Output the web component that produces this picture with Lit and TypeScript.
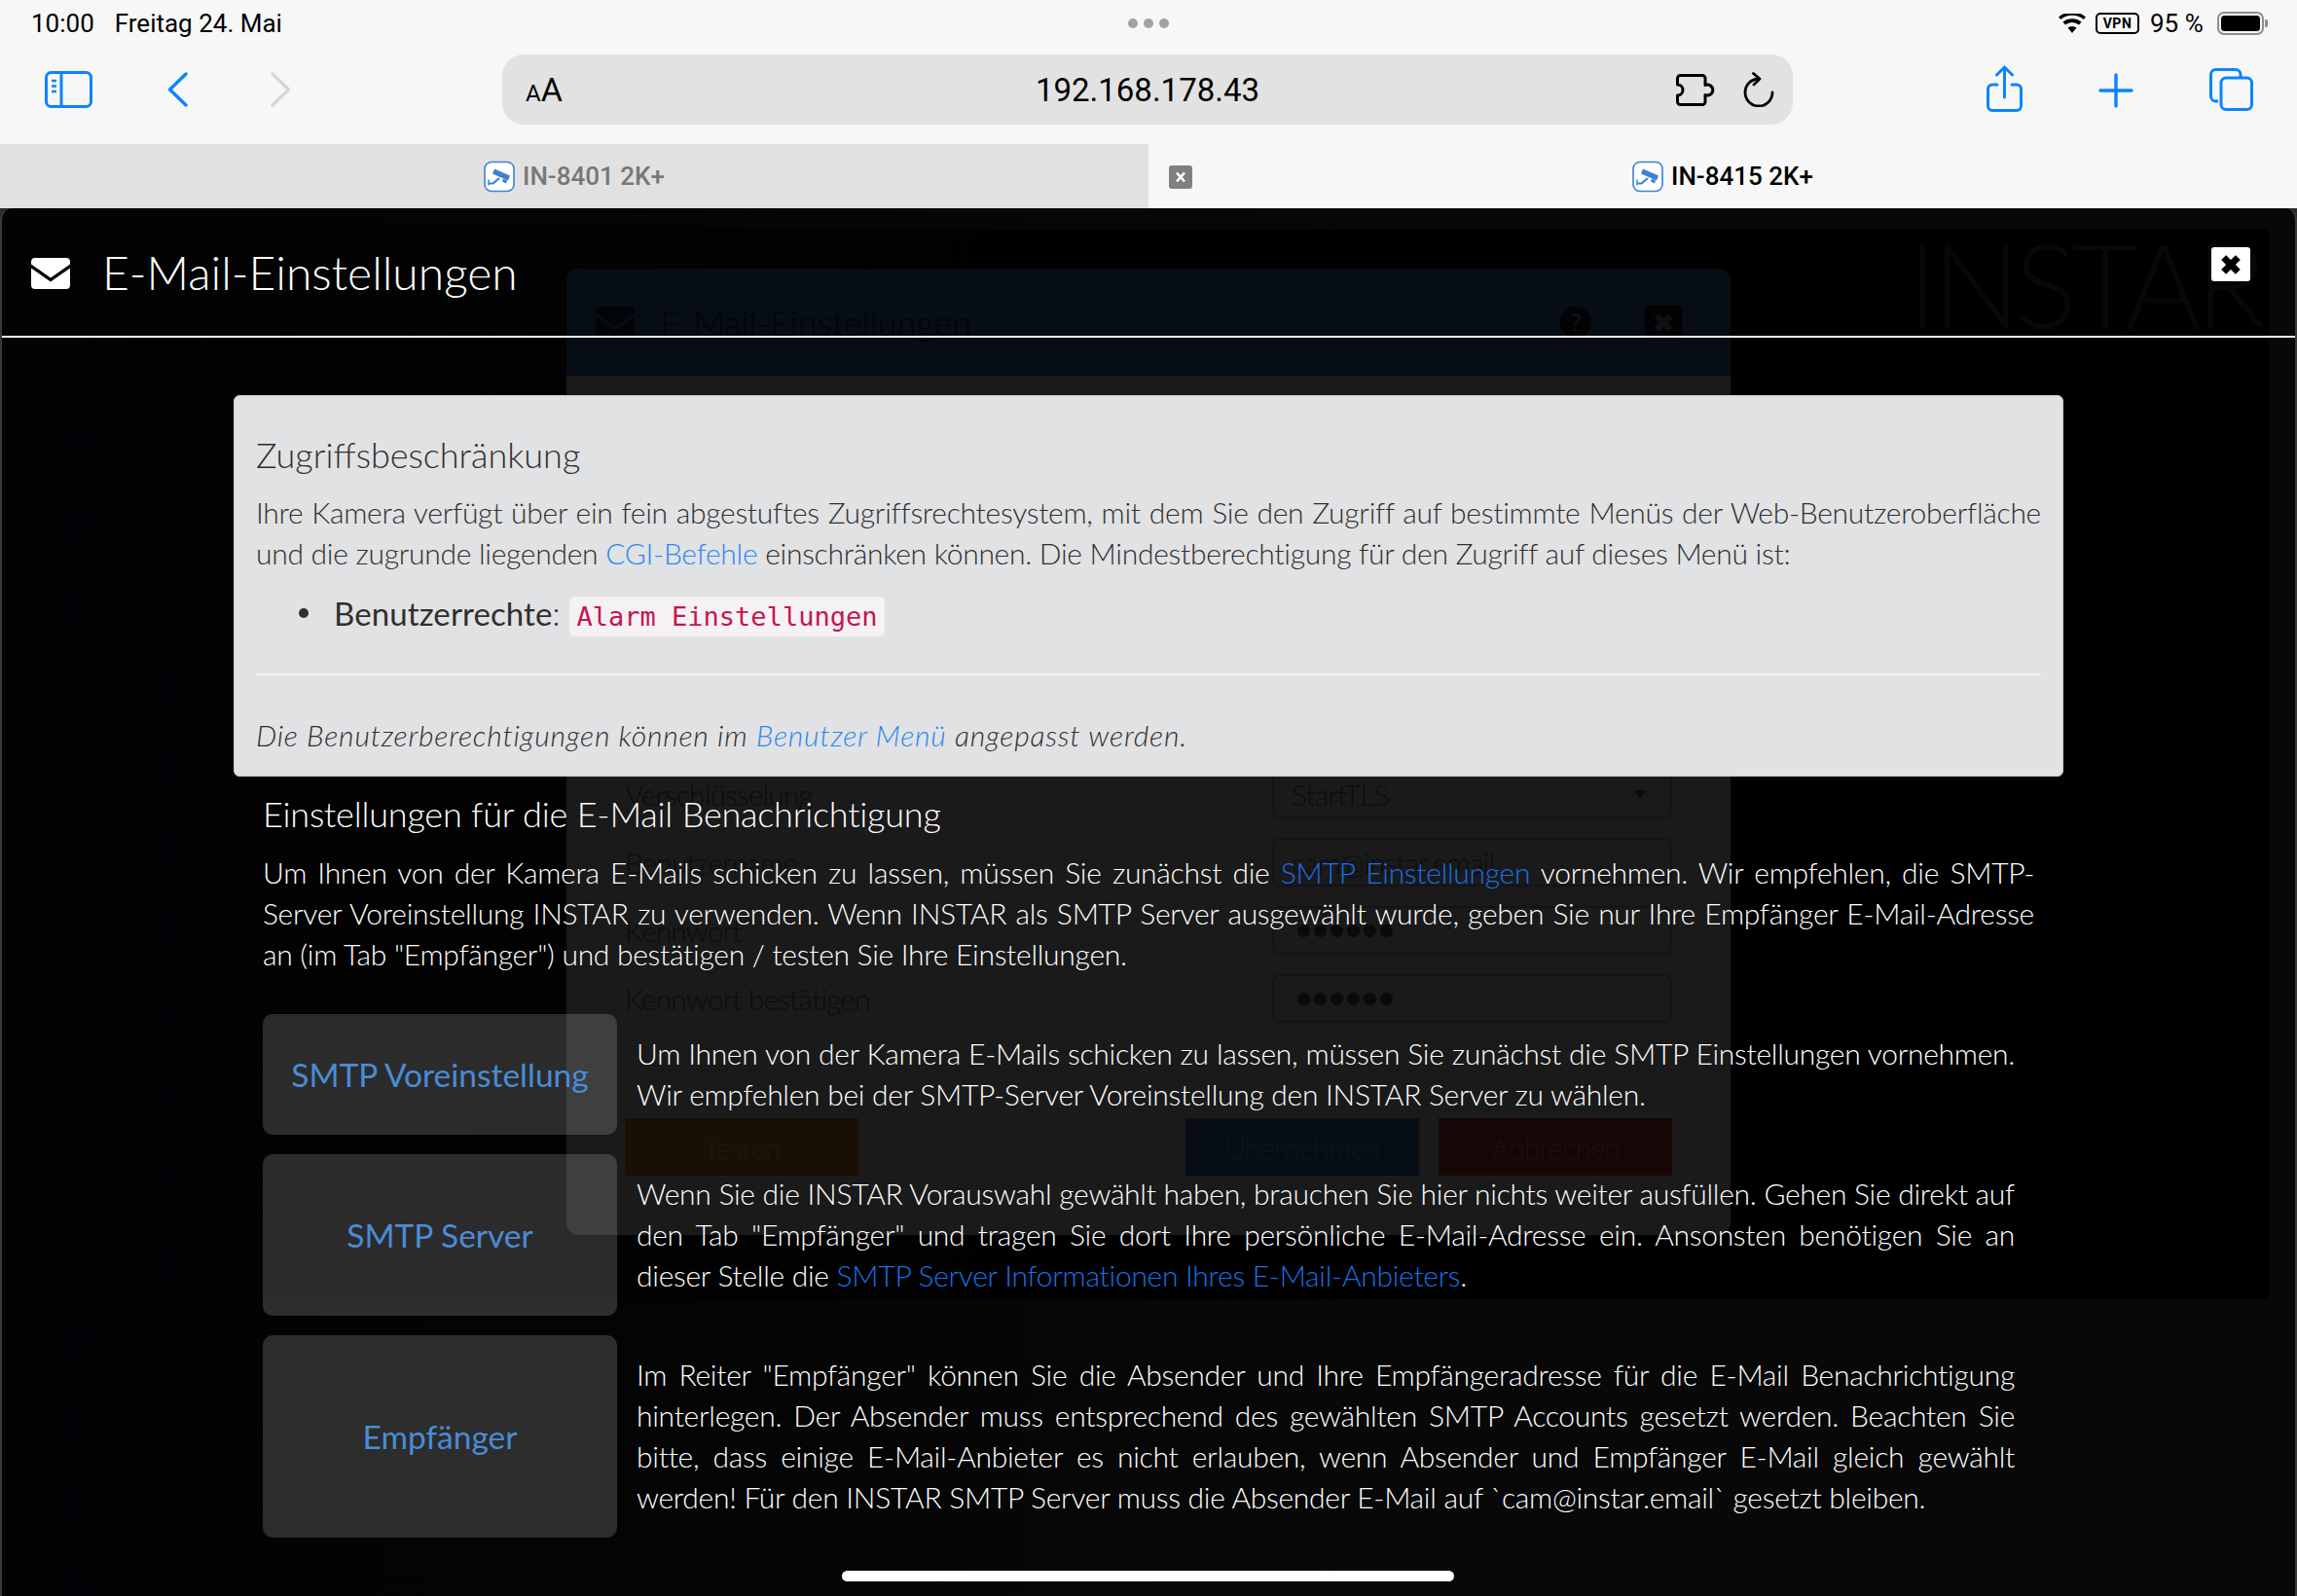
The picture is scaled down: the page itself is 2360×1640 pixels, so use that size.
import { LitElement, html, css } from "lit";
import { customElement } from "lit/decorators.js";

const favicon = html`<svg class="fav" viewBox="0 0 32 32" aria-hidden="true">
  <rect x="1" y="1" width="30" height="30" rx="7" fill="#fff" stroke="#3f7fd6" stroke-width="1.6"/>
  <path d="M11 8 L27 15 L25 20 L9 13 Z" fill="#3f7fd6"/>
  <path d="M20 18 L24 20 L23 23 L19 21 Z" fill="#3f7fd6"/>
  <path d="M5 22 H9 L15 17 L17 18 L10 24 H6 Z" fill="#3f7fd6"/>
  <path d="M5 19 V25" stroke="#3f7fd6" stroke-width="1.5"/>
</svg>`;

const envelope = (cls: string) => html`<svg class=${cls} viewBox="0 0 40 32" aria-hidden="true">
  <path d="M4 0 H36 a4 4 0 0 1 4 4 V6.5 L20 20.5 L0 6.5 V4 A4 4 0 0 1 4 0 Z M0 10.5 L20 24.5 L40 10.5 V28 a4 4 0 0 1 -4 4 H4 a4 4 0 0 1 -4 -4 Z" fill="currentColor"/>
</svg>`;

const rows = [0, 0, 0, 1, 1, 1, 1, 1, 1, 1, 1, 0, 0, 0, 0];

@customElement("app-root")
export class AppRoot extends LitElement {
  static styles = css`
    :host { display: block; width: 2360px; height: 1640px; overflow: hidden; background: #2a2a2a; font-family: "Lato", sans-serif; }
    .chrome { background: #f7f7f7; height: 148px; font-family: "Roboto", sans-serif; color: #000; }
    .status { height: 48px; display: flex; align-items: center; padding: 0 30px 0 32px; font-size: 26px; position: relative; }
    .date { margin-left: 21px; }
    .dots { position: absolute; left: 1159px; top: 19px; display: flex; gap: 6px; }
    .dots i { width: 10px; height: 10px; border-radius: 50%; background: #a2a2a2; display: block; }
    .sright { margin-left: auto; display: flex; align-items: center; }
    .vpn { width: 45px; height: 22px; box-sizing: border-box; border: 2px solid #000; border-radius: 5px; font-size: 14px; font-weight: 700; display: flex; align-items: center; justify-content: center; margin-left: 10px; letter-spacing: .5px; }
    .pct { margin-left: 11px; width: 69px; }
    .toolbar { height: 100px; display: flex; align-items: flex-start; position: relative; }
    .i-side { width: 49px; height: 38px; margin: 25px 0 0 46px; }
    .i-back { width: 21px; height: 36px; margin: 26px 0 0 77px; }
    .i-fwd { width: 21px; height: 36px; margin: 26px 0 0 85px; }
    .addr { margin: 8px 0 0 217px; width: 1326px; height: 72px; background: #e2e2e2; border-radius: 22px; display: flex; align-items: center; position: relative; box-sizing: border-box; padding: 0 19px 0 24px; }
    .aa { font-size: 34px; display: flex; align-items: baseline; line-height: 1; width: 40px; }
    .aa small { font-size: 24px; }
    .url { position: absolute; left: 0; right: 0; text-align: center; font-size: 33px; }
    .i-puz { width: 41px; height: 33px; margin-left: auto; position: relative; }
    .i-rel { width: 32px; height: 36px; margin-left: 28px; position: relative; }
    .i-share { width: 37px; height: 48px; margin: 19px 0 0 199px; }
    .i-plus { width: 36px; height: 36px; margin: 27px 0 0 78px; }
    .i-tabs { width: 45px; height: 44px; margin: 22px 0 0 78px; }
    .tabs { display: flex; height: 66px; font-family: "Roboto", sans-serif; font-size: 26px; font-weight: 500; }
    .tab { flex: 1; display: flex; align-items: center; justify-content: center; position: relative; background: #f7f7f7; color: #000; gap: 8px; }
    .tab.off { background: #e1e1e1; color: #777; }
    .fav { width: 32px; height: 33px; }
    .tabx { position: absolute; left: 21px; top: 22px; width: 24px; height: 24px; background: #808080; border-radius: 3px; }
    .modal { position: relative; height: 1426px; background: linear-gradient(90deg, #030303 0%, #040404 30%, #080808 60%); border-radius: 12px 12px 0 0; overflow: hidden; border-left: 2px solid #3a3a3a; border-right: 2px solid #3a3a3a; box-sizing: border-box; }
    .panel { position: absolute; left: 0; top: 22px; width: 2329px; height: 1099px; background: linear-gradient(90deg, #030303 0%, #020202 30%, #000 60%); }
    .logo { position: absolute; left: 1958px; top: 5px; font-size: 120px; font-weight: 300; color: #080808; letter-spacing: -6px; line-height: 1.2; }
    .side { position: absolute; left: 58px; top: 198px; display: flex; flex-direction: column; }
    .side i { display: block; width: 34px; height: 34px; margin: 25px 0; border-radius: 50%; background: #010206; }
    .side i.in { margin-left: 96px; }
    .ghost { position: absolute; left: 580px; top: 62px; width: 1196px; height: 993px; background: #1a1a1a; border-radius: 12px; overflow: hidden; color: #0c0c0c; font-size: 30px; font-weight: 300; }
    .ghead { height: 110px; background: #060d14; display: flex; align-items: center; padding: 0 30px; box-sizing: border-box; color: #020408; }
    .genv { width: 40px; height: 32px; }
    .gtitle { margin-left: 26px; font-size: 36px; }
    .gq { margin-left: auto; width: 32px; height: 32px; border-radius: 50%; background: #030303; color: #0a1017; font-weight: 700; font-size: 26px; display: flex; align-items: center; justify-content: center; }
    .gx { margin: 0 20px 0 55px; width: 38px; height: 34px; background: #020202; border-radius: 4px; color: #0a1017; font-weight: 700; font-size: 26px; display: flex; align-items: center; justify-content: center; }
    .gbody { padding: 405px 60px 0; display: flex; flex-direction: column; gap: 20px; letter-spacing: -.9px; }
    .grow { height: 50px; display: flex; justify-content: space-between; align-items: center; }
    .gctl { width: 411px; height: 50px; box-sizing: border-box; border: 2px solid #141414; border-radius: 8px; padding: 0 18px; display: flex; align-items: center; justify-content: space-between; }
    .gcaret { width: 0; height: 0; margin-right: 6px; border: 7px solid transparent; border-top: 9px solid #0c0c0c; border-bottom: 0; }
    .gdots { display: flex; gap: 4px; margin-left: 6px; }
    .gdots i { width: 13px; height: 13px; border-radius: 50%; background: #0a0a0a; display: block; }
    .gbtns { display: flex; gap: 20px; margin-top: 78px; }
    .gbtn { width: 240px; height: 59px; display: flex; align-items: center; justify-content: center; }
    .gbtn.o { background: #1a0f04; color: #22160a; margin-right: auto; }
    .gbtn.b { background: #060d14; color: #0e1419; }
    .gbtn.r { background: #160606; color: #1f0f0f; }
    .front { position: relative; }
    .mhead { height: 131px; border-bottom: 2px solid #f2f2f2; display: flex; align-items: flex-start; color: #fff; padding: 0 46px 0 30px; }
    .menv { width: 40px; height: 32px; margin-top: 51px; flex: none; }
    .mtitle { margin: 0 0 0 33px; font-size: 48px; font-weight: 300; line-height: 60px; padding-top: 36px; }
    .mx { margin-left: auto; margin-top: 40px; width: 40px; height: 35px; background: #fff; border-radius: 3px; display: flex; align-items: center; justify-content: center; }
    .mx svg { width: 28px; height: 28px; }
    .card { margin: 59px 0 0 238px; width: 1880px; box-sizing: border-box; background: #e1e2e4; border-radius: 6px; border: 1px solid #c9cacc; padding: 38px 22px 21px; color: #2f2f2f; font-size: 30px; font-weight: 300; line-height: 42px; letter-spacing: -.28px; }
    .card h3 { margin: 0 0 16px; font-size: 36px; font-weight: 300; line-height: 44px; letter-spacing: 0; }
    .card p { margin: 0; text-align: justify; }
    .card a { color: #2e87f0; text-decoration: none; }
    .card ul { margin: 20px 0 0; padding: 0 0 0 80px; list-style: none; }
    .card li { height: 42px; font-size: 33px; letter-spacing: .1px; position: relative; }
    .card li::before { content: ""; position: absolute; left: -36px; top: 16px; width: 10px; height: 10px; border-radius: 50%; background: #2f2f2f; }
    .card li b { font-weight: 400; }
    .card code { font-family: "DejaVu Sans Mono", monospace; font-size: 27px; color: #c2164e; background: #f6f1f4; border-radius: 6px; padding: 5px 8px; letter-spacing: 0; }
    .card hr { border: 0; height: 2px; background: #eeeff0; margin: 41px 0 40px; }
    .card em { font-style: italic; letter-spacing: .8px; }
    .sect { margin: 16px 0 0 268px; width: 1820px; color: #fff; font-size: 30px; font-weight: 300; line-height: 42px; letter-spacing: -.28px; }
    .sect h3 { margin: 0 0 17px; font-size: 36px; font-weight: 300; line-height: 44px; letter-spacing: -.2px; }
    .sect p { margin: 0; }
    .sect a { color: #1a6fe6; text-decoration: none; }
    .l { display: block; white-space: nowrap; text-align: justify; text-align-last: justify; }
    .e { display: block; white-space: nowrap; }
    .grid { margin-top: 41px; display: grid; grid-template-columns: 364px 1fr; gap: 20px 20px; }
    .tile { background: rgba(255, 255, 255, .165); border-radius: 10px; display: flex; align-items: center; justify-content: center; color: #4a8cd6; font-size: 33.500px; font-weight: 400; letter-spacing: 0; }
    .txt { padding: 19px 20px 21px 0; }
    .home { position: absolute; left: 863px; top: 1400px; width: 629px; height: 11px; border-radius: 6px; background: #fff; }
  `;

  render() {
    return html`
      <div class="chrome">
        <div class="status">
          <span>10:00</span><span class="date">Freitag 24. Mai</span>
          <div class="dots"><i></i><i></i><i></i></div>
          <div class="sright">
            <svg width="28" height="20" viewBox="0 0 28 20"><path d="M14 20 L9.5 14.6 A7 7 0 0 1 18.5 14.6 Z M7 11.6 A11 11 0 0 1 21 11.6 L23.6 8.6 A15 15 0 0 0 4.4 8.6 Z M2.3 6 A18.5 18.5 0 0 1 25.7 6 L28 3.4 A22 22 0 0 0 0 3.4 Z" fill="#000"/></svg>
            <span class="vpn">VPN</span>
            <span class="pct">95 %</span>
            <svg width="52" height="24" viewBox="0 0 52 24"><rect x="1" y="1" width="46" height="22" rx="6" fill="none" stroke="#8e8e8e" stroke-width="2"/><rect x="4" y="4" width="40" height="16" rx="3.5" fill="#000"/><path d="M49 8 a4 4 0 0 1 0 8 Z" fill="#8e8e8e"/></svg>
          </div>
        </div>
        <div class="toolbar">
          <svg class="i-side" viewBox="0 0 49 38" fill="none" stroke="#0a84ff" stroke-width="3"><rect x="1.5" y="1.5" width="46" height="35" rx="5"/><path d="M17 2 V36"/><path d="M7 10 H12 M7 15.5 H12 M7 21 H12" stroke-width="2.4"/></svg>
          <svg class="i-back" viewBox="0 0 21 36" fill="none" stroke="#0a84ff" stroke-width="3.4" stroke-linecap="round" stroke-linejoin="round"><path d="M19 2 L2.5 18 L19 34"/></svg>
          <svg class="i-fwd" viewBox="0 0 21 36" fill="none" stroke="#d6d6d6" stroke-width="3.4" stroke-linecap="round" stroke-linejoin="round"><path d="M2 2 L18.5 18 L2 34"/></svg>
          <div class="addr">
            <span class="aa"><small>A</small>A</span>
            <span class="url">192.168.178.43</span>
            <svg class="i-puz" viewBox="0 0 41 33" fill="none" stroke="#000" stroke-width="3" stroke-linejoin="round"><path d="M4.500 1.500 H27 a3 3 0 0 1 3 3 V11.500 a5.500 5.500 0 1 1 0 10 V28.500 a3 3 0 0 1 -3 3 H4.500 a3 3 0 0 1 -3 -3 V22 a5.500 5.500 0 1 0 0 -11 V4.500 a3 3 0 0 1 3 -3 Z"/></svg>
            <svg class="i-rel" viewBox="0 0 32 36" fill="none" stroke="#000" stroke-width="2.8" stroke-linecap="round" stroke-linejoin="round"><path d="M16 7 A14 14 0 1 0 30 21"/><path d="M10.500 1.500 L17 7 L11 13"/></svg>
          </div>
          <svg class="i-share" viewBox="0 0 37 48" fill="none" stroke="#0a84ff" stroke-width="3" stroke-linecap="round" stroke-linejoin="round"><path d="M11 20 H6 a4.500 4.500 0 0 0 -4.500 4.500 V42 a4.500 4.500 0 0 0 4.500 4.500 H31 a4.500 4.500 0 0 0 4.500 -4.500 V24.500 a4.500 4.500 0 0 0 -4.500 -4.500 H26"/><path d="M18.500 33 V2 M10.500 10 L18.500 2 L26.500 10"/></svg>
          <svg class="i-plus" viewBox="0 0 36 36" fill="none" stroke="#0a84ff" stroke-width="3.4" stroke-linecap="round"><path d="M18 2 V34 M2 18 H34"/></svg>
          <svg class="i-tabs" viewBox="0 0 45 44" fill="none" stroke="#0a84ff" stroke-width="3"><path d="M9 34 H6.500 a5 5 0 0 1 -5 -5 V6.500 a5 5 0 0 1 5 -5 H27 a5 5 0 0 1 5 5 V9"/><rect x="12" y="10" width="31.500" height="32.500" rx="5"/></svg>
        </div>
      </div>
      <div class="tabs">
        <div class="tab off">${favicon}<span>IN-8401 2K+</span></div>
        <div class="tab">
          <span class="tabx"><svg width="24" height="24" viewBox="0 0 24 24" stroke="#fff" stroke-width="2.6"><path d="M8 7.500 L16 16.500 M16 7.500 L8 16.500"/></svg></span>
          ${favicon}<span>IN-8415 2K+</span>
        </div>
      </div>
      <div class="modal">
        <div class="panel"></div>
        <div class="logo">INSTAR</div>
        <div class="side">${rows.map((r) => html`<i class=${r ? "in" : ""}></i>`)}</div>
        <div class="ghost">
          <div class="ghead">${envelope("genv")}<span class="gtitle">E-Mail-Einstellungen</span><span class="gq">?</span><span class="gx">✖</span></div>
          <div class="gbody">
            <div class="grow"><span>Verschlüsselung</span><div class="gctl"><span>StartTLS</span><span class="gcaret"></span></div></div>
            <div class="grow"><span>Benutzername</span><div class="gctl"><span>cam@instar.email</span></div></div>
            <div class="grow"><span>Kennwort</span><div class="gctl"><div class="gdots"><i></i><i></i><i></i><i></i><i></i><i></i></div></div></div>
            <div class="grow"><span>Kennwort bestätigen</span><div class="gctl"><div class="gdots"><i></i><i></i><i></i><i></i><i></i><i></i></div></div></div>
            <div class="gbtns"><div class="gbtn o">Testen</div><div class="gbtn b">Übernehmen</div><div class="gbtn r">Abbrechen</div></div>
          </div>
        </div>
        <div class="front">
          <div class="mhead">
            ${envelope("menv")}
            <h2 class="mtitle">E-Mail-Einstellungen</h2>
            <div class="mx"><svg viewBox="0 0 20 20"><path d="M3 6.500 L6.500 3 L10 6.500 L13.500 3 L17 6.500 L13.500 10 L17 13.500 L13.500 17 L10 13.500 L6.500 17 L3 13.500 L6.500 10 Z" fill="#000"/></svg></div>
          </div>
          <div class="card">
            <h3>Zugriffsbeschränkung</h3>
            <p>Ihre Kamera verfügt über ein fein abgestuftes Zugriffsrechtesystem, mit dem Sie den Zugriff auf bestimmte Menüs der Web-Benutzeroberfläche und die zugrunde liegenden <a>CGI-Befehle</a> einschränken können. Die Mindestberechtigung für den Zugriff auf dieses Menü ist:</p>
            <ul><li><b>Benutzerrechte</b>: <code>Alarm Einstellungen</code></li></ul>
            <hr />
            <p><em>Die Benutzerberechtigungen können im <a>Benutzer Menü</a> angepasst werden.</em></p>
          </div>
          <div class="sect">
            <h3>Einstellungen für die E-Mail Benachrichtigung</h3>
            <p>
              <span class="l">Um Ihnen von der Kamera E-Mails schicken zu lassen, müssen Sie zunächst die <a>SMTP Einstellungen</a> vornehmen. Wir empfehlen, die SMTP-</span>
              <span class="l">Server Voreinstellung INSTAR zu verwenden. Wenn INSTAR als SMTP Server ausgewählt wurde, geben Sie nur Ihre Empfänger E-Mail-Adresse</span>
              <span class="e">an (im Tab "Empfänger") und bestätigen / testen Sie Ihre Einstellungen.</span>
            </p>
            <div class="grid">
              <div class="tile">SMTP Voreinstellung</div>
              <div class="txt">
                <span class="l">Um Ihnen von der Kamera E-Mails schicken zu lassen, müssen Sie zunächst die SMTP Einstellungen vornehmen.</span>
                <span class="e">Wir empfehlen bei der SMTP-Server Voreinstellung den INSTAR Server zu wählen.</span>
              </div>
              <div class="tile">SMTP Server</div>
              <div class="txt">
                <span class="l">Wenn Sie die INSTAR Vorauswahl gewählt haben, brauchen Sie hier nichts weiter ausfüllen. Gehen Sie direkt auf</span>
                <span class="l">den Tab "Empfänger" und tragen Sie dort Ihre persönliche E-Mail-Adresse ein. Ansonsten benötigen Sie an</span>
                <span class="e">dieser Stelle die <a>SMTP Server Informationen Ihres E-Mail-Anbieters</a>.</span>
              </div>
              <div class="tile">Empfänger</div>
              <div class="txt">
                <span class="l">Im Reiter "Empfänger" können Sie die Absender und Ihre Empfängeradresse für die E-Mail Benachrichtigung</span>
                <span class="l">hinterlegen. Der Absender muss entsprechend des gewählten SMTP Accounts gesetzt werden. Beachten Sie</span>
                <span class="l">bitte, dass einige E-Mail-Anbieter es nicht erlauben, wenn Absender und Empfänger E-Mail gleich gewählt</span>
                <span class="e">werden! Für den INSTAR SMTP Server muss die Absender E-Mail auf \`cam@instar.email\` gesetzt bleiben.</span>
              </div>
            </div>
          </div>
        </div>
        <div class="home"></div>
      </div>
    `;
  }
}
